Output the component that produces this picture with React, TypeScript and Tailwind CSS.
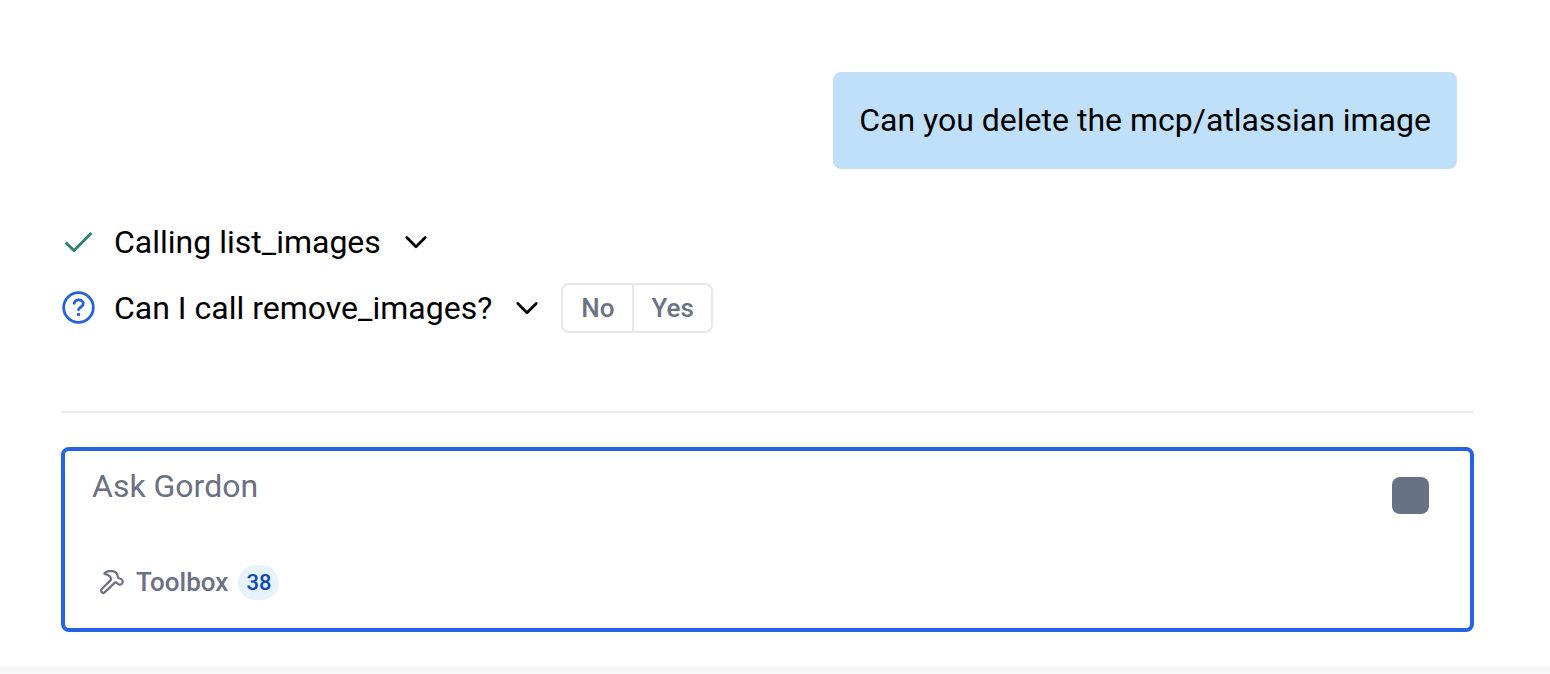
import React from "react";

function Chevron() {
  return (
    <svg viewBox="0 0 24 24" className="h-6 w-6" fill="none" stroke="currentColor" strokeWidth="2.8" strokeLinecap="round" strokeLinejoin="round" aria-hidden="true">
      <path d="M2.8 7.6 12 16.8l9.2-9.2" />
    </svg>
  );
}

function CheckIcon() {
  return (
    <svg viewBox="0 0 34 34" className="h-[34px] w-[34px] shrink-0" fill="none" stroke="#2e7f6e" strokeWidth="2.8" aria-hidden="true">
      <path d="M3.6 17.4 12 25.6 29.4 8" />
    </svg>
  );
}

function QuestionIcon() {
  return (
    <svg viewBox="0 0 34 34" className="h-[34px] w-[34px] shrink-0" fill="none" stroke="#2560e0" strokeWidth="2.8" strokeLinecap="round" aria-hidden="true">
      <circle cx="16.5" cy="16.5" r="14.8" />
      <path d="M12.2 12.3c.5-2.2 2.3-3.5 4.5-3.5 2.6 0 4.6 1.7 4.6 4 0 3.2-4.5 3.5-4.8 5.9" />
      <circle cx="16.5" cy="23.5" r="1.7" fill="#2560e0" stroke="none" />
    </svg>
  );
}

function HammerIcon() {
  return (
    <svg viewBox="0 0 24 24" className="h-6 w-6" fill="none" stroke="currentColor" strokeWidth="2.2" strokeLinejoin="round" aria-hidden="true">
      <path d="M5.2 2.4C7.4 1.1 10 .8 12.6 1.2c2.800.6 4.900 2.700 5.200 5.200.1 1.300.8 1.900 1.900 2.100 1.300.2 2.400 1.100 2.900 2.500.3 1 0 2-.8 2.800-1.100 1.100-2.600 1.200-3.700.2-1-.9-1.900-2-3.200-1.400L4.900 22.100c-.9.9-2.300.8-3.100 0s-.8-2.200 0-3.100L10.900 9.900C11.400 7 8.500 4.600 5.200 4.200c-1-.2-1-1.200 0-1.800Z" />
    </svg>
  );
}

export default function App() {
  return (
    <main className="border-b-8 border-[#f8f8f8] bg-white pt-[72px] pr-[76px] pb-[34px] pl-[61px] font-[Roboto,sans-serif] text-[32px] leading-[37px] text-black">
      <div className="mr-[17px] flex justify-end">
        <p className="rounded-lg bg-[#c0e0f9] px-[26px] py-[30px]">Can you delete the mcp/atlassian image</p>
      </div>
      <div className="mt-12 flex flex-col gap-4 pl-px">
        <div className="flex h-[50px] items-center">
          <CheckIcon />
          <button type="button" className="ml-[18px] flex items-center gap-[23px]">
            Calling list_images
            <Chevron />
          </button>
        </div>
        <div className="flex items-center">
          <QuestionIcon />
          <button type="button" className="ml-[18px] flex items-center gap-[23px]">
            Can I call remove_images?
            <Chevron />
          </button>
          <div className="ml-[22px] flex h-[50px] rounded-lg border-2 border-[#e8e8e9] text-[26px] font-medium text-[#6b7285]">
            <button type="button" className="px-[18px]">No</button>
            <button type="button" className="border-l-2 border-[#e8e8e9] px-[17px]">Yes</button>
          </div>
        </div>
      </div>
      <hr className="mt-[78px] border-t-2 border-[#ebebeb]" />
      <form className="mt-[34px] rounded-lg border-4 border-[#2463e4] pt-[17px] pr-[41px] pb-7 pl-[27px]">
        <div className="flex items-start">
          <input
            type="text"
            aria-label="Ask Gordon"
            placeholder="Ask Gordon"
            className="h-9 min-w-0 flex-1 outline-none placeholder:text-[#6b7082] placeholder:opacity-100"
          />
          <button type="button" aria-label="Stop" className="mt-[9px] h-[37px] w-[37px] rounded-lg bg-[#677285]" />
        </div>
        <button type="button" className="mt-[50px] ml-2 flex h-9 items-center text-[26px] font-medium text-[#6b7082]">
          <HammerIcon />
          <span className="ml-3">Toolbox</span>
          <span className="ml-2.5 rounded-full bg-[#e6f3fd] px-2 text-[22px] leading-[35px] text-[#1048b8]">38</span>
        </button>
      </form>
    </main>
  );
}
